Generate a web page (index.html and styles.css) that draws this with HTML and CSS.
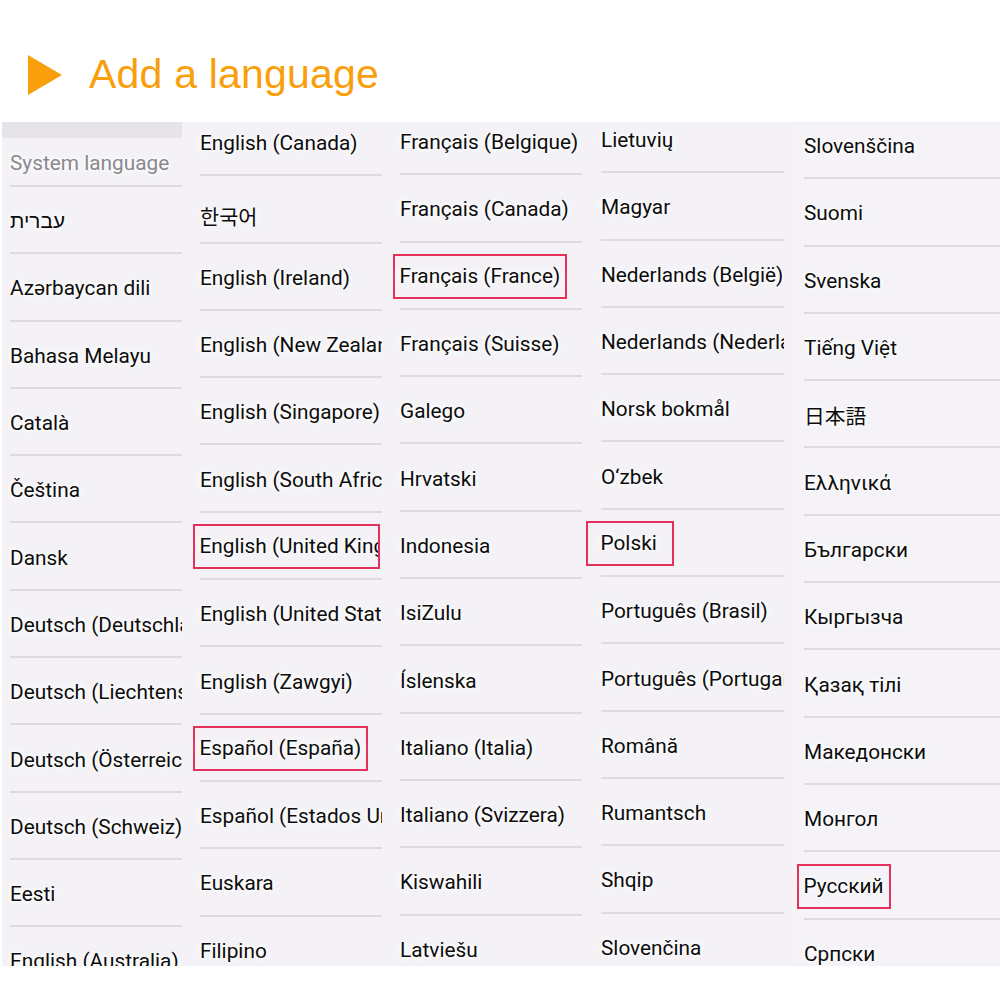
FILE: index.html
```html
<!DOCTYPE html>
<html lang="en">
<head>
  <meta charset="UTF-8" />
  <title>Add a language</title>
  <link rel="stylesheet" href="styles.css">
</head>
<body>
  <header class="title-bar">
    <svg class="arrow" width="34" height="40" viewBox="0 0 34 40">
      <polygon points="0,0 34,20 0,40" fill="#fa9f0c" />
    </svg>
    <h1>Add a language</h1>
  </header>

  <div class="panel">
    <div class="col col-1">
      <div class="top-bar"></div>
      <ul class="list">
        <li class="item item-head"><span class="muted">System language</span></li>
        <li class="item"><span dir="rtl">עברית</span></li>
        <li class="item"><span>Azərbaycan dili</span></li>
        <li class="item"><span>Bahasa Melayu</span></li>
        <li class="item"><span>Català</span></li>
        <li class="item"><span>Čeština</span></li>
        <li class="item"><span>Dansk</span></li>
        <li class="item"><span>Deutsch (Deutschland)</span></li>
        <li class="item"><span>Deutsch (Liechtenstein)</span></li>
        <li class="item"><span>Deutsch (Österreich)</span></li>
        <li class="item"><span>Deutsch (Schweiz)</span></li>
        <li class="item"><span>Eesti</span></li>
        <li class="item"><span>English (Australia)</span></li>
      </ul>
    </div>

    <div class="col col-2">
      <ul class="list">
        <li class="item"><span>English (Canada)</span></li>
        <li class="item item-ko"><span lang="ko">한국어</span></li>
        <li class="item"><span>English (Ireland)</span></li>
        <li class="item"><span>English (New Zealand)</span></li>
        <li class="item"><span>English (Singapore)</span></li>
        <li class="item"><span>English (South Africa)</span></li>
        <li class="item"><span class="marked marked-clip">English (United Kingdom)</span></li>
        <li class="item"><span>English (United States)</span></li>
        <li class="item"><span>English (Zawgyi)</span></li>
        <li class="item"><span class="marked">Español (España)</span></li>
        <li class="item"><span>Español (Estados Unidos)</span></li>
        <li class="item"><span>Euskara</span></li>
        <li class="item"><span>Filipino</span></li>
      </ul>
    </div>

    <div class="col col-3">
      <ul class="list">
        <li class="item"><span>Français (Belgique)</span></li>
        <li class="item"><span>Français (Canada)</span></li>
        <li class="item"><span class="marked">Français (France)</span></li>
        <li class="item"><span>Français (Suisse)</span></li>
        <li class="item"><span>Galego</span></li>
        <li class="item"><span>Hrvatski</span></li>
        <li class="item"><span>Indonesia</span></li>
        <li class="item"><span>IsiZulu</span></li>
        <li class="item"><span>Íslenska</span></li>
        <li class="item"><span>Italiano (Italia)</span></li>
        <li class="item"><span>Italiano (Svizzera)</span></li>
        <li class="item"><span>Kiswahili</span></li>
        <li class="item"><span>Latviešu</span></li>
      </ul>
    </div>

    <div class="col col-4">
      <ul class="list">
        <li class="item"><span>Lietuvių</span></li>
        <li class="item"><span>Magyar</span></li>
        <li class="item"><span>Nederlands (België)</span></li>
        <li class="item"><span>Nederlands (Nederland)</span></li>
        <li class="item"><span>Norsk bokmål</span></li>
        <li class="item"><span>O‘zbek</span></li>
        <li class="item"><span class="marked marked-wide">Polski</span></li>
        <li class="item"><span>Português (Brasil)</span></li>
        <li class="item"><span>Português (Portugal)</span></li>
        <li class="item"><span>Română</span></li>
        <li class="item"><span>Rumantsch</span></li>
        <li class="item"><span>Shqip</span></li>
        <li class="item"><span>Slovenčina</span></li>
      </ul>
    </div>

    <div class="col col-5">
      <ul class="list">
        <li class="item"><span>Slovenščina</span></li>
        <li class="item"><span>Suomi</span></li>
        <li class="item"><span>Svenska</span></li>
        <li class="item"><span>Tiếng Việt</span></li>
        <li class="item"><span lang="ja">日本語</span></li>
        <li class="item"><span>Ελληνικά</span></li>
        <li class="item"><span>Български</span></li>
        <li class="item"><span>Кыргызча</span></li>
        <li class="item"><span>Қазақ тілі</span></li>
        <li class="item"><span>Македонски</span></li>
        <li class="item"><span>Монгол</span></li>
        <li class="item"><span class="marked">Русский</span></li>
        <li class="item"><span>Српски</span></li>
      </ul>
    </div>
  </div>
</body>
</html>
```

FILE: styles.css
```css
body {
  margin: 0;
  background: #fff;
  font-family: Roboto, "Noto Sans", "Noto Sans CJK KR", sans-serif;
}
.title-bar {
  height: 122px;
  display: flex;
  align-items: center;
  padding-left: 28px;
  padding-top: 26px;
  box-sizing: border-box;
}
.arrow {
  display: block;
  margin-right: 27px;
  margin-top: 2px;
}
.title-bar h1 {
  margin: 0;
  font-family: "Liberation Sans", Arial, sans-serif;
  font-weight: normal;
  font-size: 41px;
  color: #fa9f0c;
  letter-spacing: 0.2px;
}

/* five strips of the language list */
.panel {
  height: 844px;
  margin-left: 2px;
  display: grid;
  grid-template-columns: 180px 200px 200px 202px 1fr;
  background: #f4f2f6;
}
.col {
  overflow: hidden;
  white-space: nowrap;
}
.col-1 { padding-left: 8px; }
.col-2 { padding-left: 18px; }
.col-3 { padding-left: 18px; }
.col-4 { padding-left: 19px; }
.col-5 { margin-left: 6px; padding-left: 14px; background: #f5f3f7; }

.col-2 .list { margin-top: -13px; }
.col-3 .list { margin-top: -14px; }
.col-4 .list { margin-top: -16px; }
.col-5 .list { margin-top: -10px; }

.top-bar {
  height: 16px;
  margin-left: -8px;
  background: #e6e4e8;
}
.list {
  list-style: none;
  margin: 0;
  padding: 0;
}
.item {
  height: 67.3px;
  box-sizing: border-box;
  padding-top: 3px;
  border-bottom: 2px solid #dddbe0;
  display: flex;
  align-items: center;
  font-size: 20.8px;
  color: #0c0c0c;
  text-shadow: 0 0 3px #fff, 0 0 6px #fff, 0 0 8px #fff;
}
.item-head {
  height: 49px;
}
.item-ko span {
  padding-top: 12px;
}
.muted {
  color: #8a888c;
}
.marked {
  display: inline-block;
  border: 2.5px solid #e2325c;
  padding: 9px 5px;
  margin-left: -7.5px;
  line-height: 23px;
}
.marked-clip {
  box-sizing: border-box;
  max-width: 187px;
  overflow: hidden;
}
.marked-wide {
  padding-left: 13px;
  padding-right: 15px;
  margin-left: -15.5px;
}
```
